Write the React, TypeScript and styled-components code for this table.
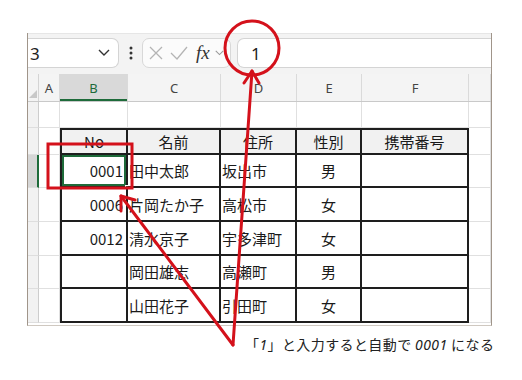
import React from "react";
import styled, { createGlobalStyle } from "styled-components";

const GlobalStyle = createGlobalStyle`
  html, body { margin: 0; padding: 0; background: #ffffff; }
  body { width: 522px; height: 380px; overflow: hidden; font-family: "Noto Sans CJK JP", "Noto Sans", sans-serif; }
  * { box-sizing: border-box; }
`;

const COLS = "11px 21px 68px 93px 76px 65px 107px 1fr";
const RED = "#d4111b";
const DARK = "#1e1e1e";
const GRID = "#e0e0e0";
const GREEN = "#1e6b3a";

const Page = styled.div`
  position: relative;
  width: 522px;
  height: 380px;
  padding: 33px 0 0 27px;
`;

const Frame = styled.div`
  width: 465px;
  height: 293px;
  border-left: 1px solid #a0958a;
  border-right: 1px solid #a0958a;
  border-bottom: 1px solid #cfc8c0;
  overflow: hidden;
  background: #fff;
  display: flex;
  flex-direction: column;
`;

const Toolbar = styled.div`
  height: 41px;
  flex: none;
  display: flex;
  align-items: stretch;
  padding: 4px 0 6px 0;
  background: #f3f3f3;
  border-top: 1px solid #e6e6e6;
`;

const NameBox = styled.div`
  width: 91px;
  background: #fff;
  border: 1px solid #d4d4d4;
  border-left: none;
  border-radius: 0 7px 7px 0;
  display: flex;
  align-items: center;
  justify-content: space-between;
  padding: 0 8px 0 2px;
  overflow: hidden;
`;

const NameText = styled.span`
  font-family: "Noto Sans", sans-serif;
  font-size: 17px;
  color: #222;
`;

const Dots = styled.div`
  width: 23px;
  display: flex;
  align-items: center;
  justify-content: center;
`;

const FxBox = styled.div`
  width: 89px;
  background: #fbfbfb;
  border: 1px solid #d8d8d8;
  border-radius: 7px;
  display: flex;
  align-items: center;
  padding-left: 5px;
  gap: 5px;
`;

const Fx = styled.span`
  font-family: "Liberation Serif", serif;
  font-style: italic;
  font-size: 19px;
  color: #333;
  margin-left: 2px;
`;

const FormulaInput = styled.div`
  flex: 1;
  margin-left: 6px;
  background: #fff;
  border: 1px solid #d4d4d4;
  border-right: none;
  border-radius: 7px 0 0 7px;
  display: flex;
  align-items: center;
  padding-left: 13px;
  font-family: "Noto Sans", sans-serif;
  font-size: 17px;
  color: #222;
`;

const HeaderRow = styled.div`
  height: 28px;
  flex: none;
  display: grid;
  grid-template-columns: ${COLS};
  background: #f4f4f4;
  border-bottom: 1px solid #c9c9c9;
`;

const Corner = styled.div`
  border-right: 1px solid #d4d4d4;
  display: flex;
  align-items: flex-end;
  justify-content: flex-end;
  padding: 0 1px 3px 0;
`;

const ColHead = styled.div<{ $sel?: boolean }>`
  display: flex;
  align-items: center;
  justify-content: center;
  font-family: "Noto Sans", sans-serif;
  font-size: 13px;
  color: ${(p) => (p.$sel ? GREEN : "#444")};
  background: ${(p) => (p.$sel ? "#d9d9d9" : "transparent")};
  border-right: 1px solid #dadada;
  box-shadow: ${(p) => (p.$sel ? `inset 0 -2px 0 ${GREEN}` : "none")};
`;

const SheetRow = styled.div<{ $h: number }>`
  height: ${(p) => p.$h}px;
  flex: none;
  display: grid;
  grid-template-columns: ${COLS};
`;

const RowHead = styled.div<{ $sel?: boolean }>`
  background: ${(p) => (p.$sel ? "#d6d6d6" : "#f2f2f2")};
  border-right: ${(p) => (p.$sel ? `2px solid ${GREEN}` : "1px solid #cdcdcd")};
  border-bottom: 1px solid #dedede;
`;

const GridCell = styled.div`
  border-right: 1px solid ${GRID};
  border-bottom: 1px solid ${GRID};
`;

type Align = "left" | "center" | "right";

const TCell = styled.div<{
  $align: Align;
  $head?: boolean;
  $first?: boolean;
  $top?: boolean;
  $sel?: boolean;
}>`
  position: relative;
  display: flex;
  align-items: center;
  justify-content: ${(p) =>
    p.$align === "left" ? "flex-start" : p.$align === "right" ? "flex-end" : "center"};
  padding: ${(p) => (p.$align === "right" ? "0 3px 0 0" : p.$align === "left" ? "0 0 0 1px" : "0")};
  font-size: 15px;
  color: #1a1a1a;
  white-space: nowrap;
  background: ${(p) => (p.$head ? "#f1f1f1" : "#fff")};
  border-right: 2px solid ${DARK};
  border-bottom: 2px solid ${DARK};
  border-left: ${(p) => (p.$first ? `2px solid ${DARK}` : "none")};
  border-top: ${(p) => (p.$top ? `2px solid ${DARK}` : "none")};
  box-shadow: ${(p) => (p.$sel ? `inset 0 0 0 2px ${GREEN}` : "none")};
`;

const FillHandle = styled.span`
  position: absolute;
  right: -4px;
  bottom: -4px;
  width: 5px;
  height: 5px;
  background: ${GREEN};
  border: 1px solid #fff;
`;

const Caption = styled.div`
  margin: 8px 0 0 218px;
  font-family: "Noto Sans CJK JP", sans-serif;
  font-size: 14px;
  line-height: 20px;
  color: #222;
  white-space: nowrap;
  letter-spacing: 0.4px;
`;

const Em = styled.span`
  font-family: "Noto Sans", sans-serif;
  font-style: italic;
`;

const Overlay = styled.svg`
  position: absolute;
  left: 0;
  top: 0;
  pointer-events: none;
`;

const Chevron = ({ w = 12, color = "#444" }: { w?: number; color?: string }) => (
  <svg width={w} height={w * 0.6} viewBox="0 0 12 7">
    <path d="M1 1 L6 6 L11 1" fill="none" stroke={color} strokeWidth="1.4" />
  </svg>
);

type Row = [string, string, string, string];
const rows: Row[] = [
  ["0001", "田中太郎", "坂出市", "男"],
  ["0006", "片岡たか子", "高松市", "女"],
  ["0012", "清水京子", "宇多津町", "女"],
  ["", "岡田雄志", "高瀬町", "男"],
  ["", "山田花子", "引田町", "女"],
];
const rowHeights = [33, 34, 34, 33, 34];

export default function App() {
  return (
    <>
      <GlobalStyle />
      <Page>
        <Frame>
          <Toolbar>
            <NameBox>
              <NameText>3</NameText>
              <Chevron w={12} color="#333" />
            </NameBox>
            <Dots>
              <svg width="4" height="14" viewBox="0 0 4 14">
                <circle cx="2" cy="2" r="1.5" fill="#333" />
                <circle cx="2" cy="7" r="1.5" fill="#333" />
                <circle cx="2" cy="12" r="1.5" fill="#333" />
              </svg>
            </Dots>
            <FxBox>
              <svg width="16" height="16" viewBox="0 0 16 16">
                <path d="M2 2 L14 14 M14 2 L2 14" stroke="#b4b4b4" strokeWidth="1.3" />
              </svg>
              <svg width="20" height="16" viewBox="0 0 20 16">
                <path d="M2 8 L8 14 L18 2" fill="none" stroke="#b4b4b4" strokeWidth="1.3" />
              </svg>
              <Fx>fx</Fx>
              <Chevron w={9} color="#999" />
            </FxBox>
            <FormulaInput>1</FormulaInput>
          </Toolbar>

          <HeaderRow>
            <Corner>
              <svg width="8" height="8" viewBox="0 0 8 8">
                <path d="M8 0 L8 8 L0 8 Z" fill="#c8c8c8" />
              </svg>
            </Corner>
            <ColHead>A</ColHead>
            <ColHead $sel>B</ColHead>
            <ColHead>C</ColHead>
            <ColHead>D</ColHead>
            <ColHead>E</ColHead>
            <ColHead>F</ColHead>
            <ColHead />
          </HeaderRow>

          <SheetRow $h={26}>
            <RowHead />
            <GridCell />
            <GridCell />
            <GridCell />
            <GridCell />
            <GridCell />
            <GridCell />
            <GridCell />
          </SheetRow>

          <SheetRow $h={27}>
            <RowHead />
            <GridCell />
            <TCell $align="center" $head $first $top>No</TCell>
            <TCell $align="center" $head $top>名前</TCell>
            <TCell $align="center" $head $top>住所</TCell>
            <TCell $align="center" $head $top>性別</TCell>
            <TCell $align="center" $head $top>携帯番号</TCell>
            <GridCell />
          </SheetRow>

          {rows.map((r, i) => (
            <SheetRow key={i} $h={rowHeights[i]}>
              <RowHead $sel={i === 0} />
              <GridCell />
              <TCell $align="right" $first $sel={i === 0}>
                {r[0]}
                {i === 0 && <FillHandle />}
              </TCell>
              <TCell $align="left">{r[1]}</TCell>
              <TCell $align="left">{r[2]}</TCell>
              <TCell $align="center">{r[3]}</TCell>
              <TCell $align="center" />
              <GridCell />
            </SheetRow>
          ))}
        </Frame>

        <Caption>
          「<Em>1</Em>」と入力すると自動で <Em>0001</Em> になる
        </Caption>

        <Overlay width="522" height="380" viewBox="0 0 522 380">
          <circle cx="252" cy="48" r="27" fill="none" stroke={RED} strokeWidth="3" />
          <rect x="48" y="144" width="84" height="44" fill="none" stroke={RED} strokeWidth="3" />
          <g fill="none" stroke={RED} strokeWidth="3" strokeLinecap="round" strokeLinejoin="round">
            <path d="M233 345 L252 71" />
            <path d="M244 83 L252 71 L259 83" />
            <path d="M233 345 L121 196" />
            <path d="M135 200 L121 196 L121 211" />
          </g>
        </Overlay>
      </Page>
    </>
  );
}
